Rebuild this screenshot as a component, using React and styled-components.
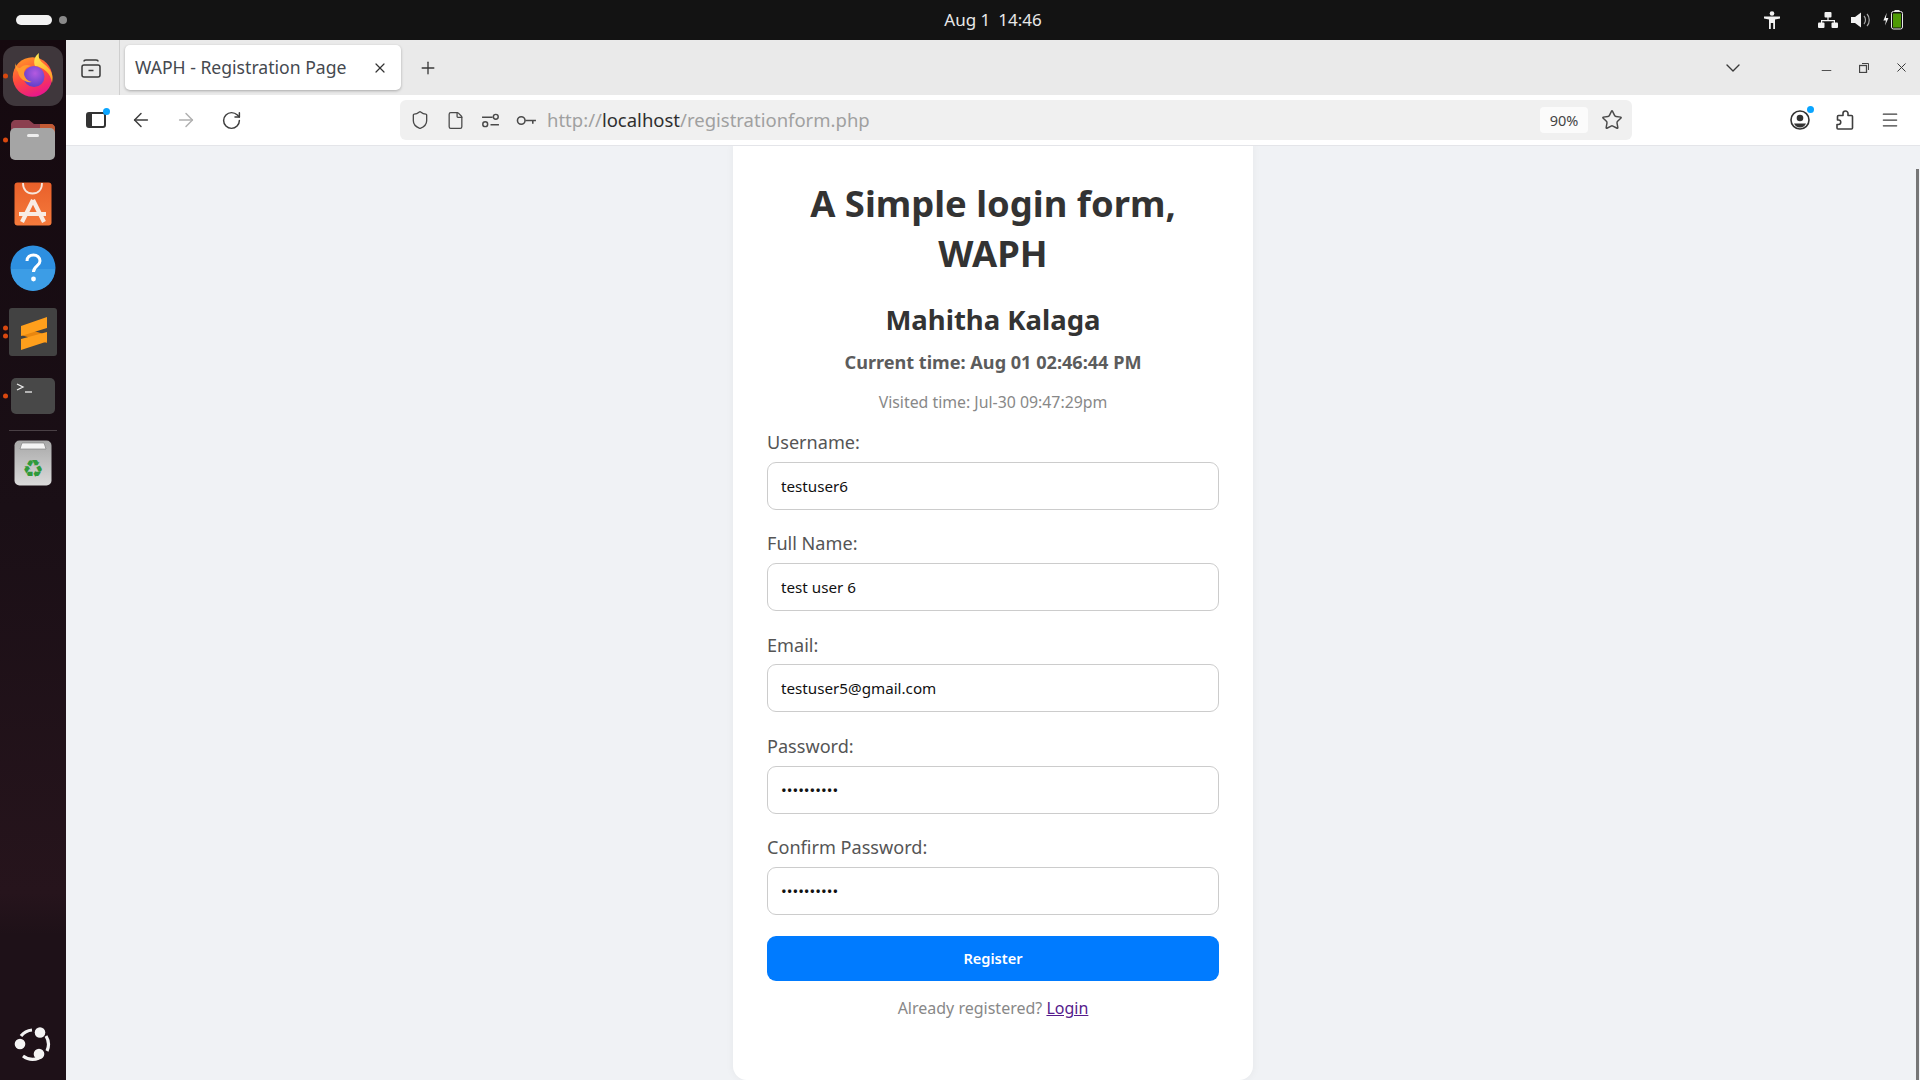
import styled, { createGlobalStyle } from "styled-components";
import { ArrowLeft, ArrowRight, RotateCw, Shield, File, Star, Menu, X, Plus, ChevronDown, Minus } from "lucide-react";

const GlobalStyle = createGlobalStyle`
  html, body { margin: 0; padding: 0; height: 100%; overflow: hidden; }
  * { box-sizing: border-box; }
  body { font-family: "Noto Sans", sans-serif; }
`;

const Screen = styled.div`
  width: 1920px;
  height: 1080px;
  display: grid;
  grid-template-rows: 40px 1fr;
  overflow: hidden;
`;

const TopBar = styled.div`
  background: #131313;
  color: #e8e8e8;
  display: grid;
  grid-template-columns: 1fr auto 1fr;
  align-items: center;
  padding: 0 16px;
  font-size: 17px;
`;

const Workspaces = styled.div`
  display: flex;
  align-items: center;
  gap: 7px;
`;

const WsPill = styled.span`
  width: 36px;
  height: 10px;
  border-radius: 5px;
  background: #f2f2f2;
`;

const WsDot = styled.span`
  width: 8px;
  height: 8px;
  border-radius: 50%;
  background: #8a8a8a;
`;

const Clock = styled.div`
  display: flex;
  gap: 8px;
  padding: 0 0 2px 66px;
`;

const Tray = styled.div`
  display: flex;
  justify-content: flex-end;
  align-items: center;
  gap: 13px;
  padding-right: 1px;
`;

const TrayGap = styled.span`
  width: 12px;
`;

const Body = styled.div`
  display: grid;
  grid-template-columns: 66px 1fr;
  min-height: 0;
`;

const Dock = styled.nav`
  background: linear-gradient(180deg, #15090f 0%, #1a0f16 45%, #26141c 82%, #1e1118 86%, #1e1118 100%);
  display: flex;
  flex-direction: column;
  align-items: center;
  padding-top: 6px;
  position: relative;
`;

const DockItem = styled.div`
  position: relative;
  width: 60px;
  height: 60px;
  margin-bottom: 4px;
  border-radius: 13px;
  display: flex;
  align-items: center;
  justify-content: center;
  background: ${(p) => (p.$active ? "#3f373c" : "transparent")};
`;

const RunDots = styled.span`
  position: absolute;
  left: 0;
  top: 50%;
  transform: translateY(-50%);
  display: flex;
  flex-direction: column;
  gap: 3px;
`;

const RunDot = styled.i`
  display: block;
  width: 5px;
  height: 5px;
  border-radius: 50%;
  background: #d9480f;
`;

const DockRule = styled.div`
  width: 48px;
  height: 1px;
  background: #4a4045;
  margin: 0 0 2px;
`;

const DockBottom = styled.div`
  margin-top: auto;
  margin-bottom: 2px;
`;

const Browser = styled.div`
  display: grid;
  grid-template-rows: 55px 51px 1fr;
  min-height: 0;
  min-width: 0;
`;

const TabStrip = styled.div`
  background: #eaeaea;
  display: flex;
  align-items: center;
  color: #3a3a3a;
`;

const TabViews = styled.div`
  width: 54px;
  height: 100%;
  padding-right: 4px;
  display: flex;
  align-items: center;
  justify-content: center;
  border-right: 1px solid #cfcfcf;
`;

const Tab = styled.div`
  width: 276px;
  height: 45px;
  margin-left: 5px;
  padding: 0 13px 0 10px;
  background: #fff;
  border-radius: 5px;
  box-shadow: 0 1px 3px rgba(0, 0, 0, 0.28);
  display: flex;
  align-items: center;
  justify-content: space-between;
  font-size: 17.6px;
  color: #45494f;
`;

const TabLabel = styled.span`
  padding-bottom: 2px;
`;

const NewTab = styled.div`
  width: 53px;
  display: flex;
  justify-content: center;
`;

const StripEnd = styled.div`
  margin-left: auto;
  display: flex;
  align-items: center;
`;

const ListTabs = styled.div`
  margin-right: 74px;
  display: flex;
`;

const WinButtons = styled.div`
  display: flex;
  align-items: center;
  gap: 25px;
  padding-right: 11px;
`;

const MinButton = styled.span`
  display: flex;
  transform: translateY(3px);
`;

const Toolbar = styled.div`
  background: #fff;
  border-bottom: 1px solid #e4e5e9;
  display: flex;
  align-items: center;
  padding-left: 20px;
  color: #3e3e3e;
`;

const NavButtons = styled.div`
  display: flex;
  align-items: center;
  gap: 23.5px;
  width: 314px;
`;

const Badged = styled.span`
  position: relative;
  display: flex;
  &::after {
    content: "";
    position: absolute;
    top: -4px;
    right: -4px;
    width: 7px;
    height: 7px;
    border-radius: 50%;
    background: #0aa5ff;
  }
`;

const UrlBar = styled.div`
  width: 1232px;
  height: 40px;
  background: #f0f0f0;
  border-radius: 6px;
  display: flex;
  align-items: center;
  padding-left: 10px;
  gap: 16px;
  color: #4a4a4a;
`;

const UrlText = styled.div`
  font-size: 18.5px;
  color: #a0a0a0;
  margin-left: -6px;
  padding-bottom: 2px;
  flex: 1;
  b {
    font-weight: 400;
    color: #2e2e2e;
  }
`;

const Zoom = styled.div`
  width: 48px;
  height: 26px;
  background: #fbfbfb;
  border-radius: 4px;
  display: flex;
  align-items: center;
  justify-content: center;
  font-size: 14.5px;
  color: #444;
`;

const UrlStar = styled.div`
  display: flex;
  margin-left: -3px;
  margin-right: 9px;
`;

const ToolEnd = styled.div`
  margin-left: auto;
  display: flex;
  align-items: center;
  gap: 25px;
  padding-right: 20px;
`;

const Page = styled.main`
  background: #f0f2f5;
  position: relative;
  overflow: hidden;
  display: flex;
  justify-content: center;
`;

const ScrollThumb = styled.div`
  position: absolute;
  right: 1px;
  top: 23px;
  bottom: 0;
  width: 3px;
  background: #767676;
`;

const Card = styled.section`
  width: 520px;
  height: 934px;
  background: #fff;
  border-radius: 0 0 14px 14px;
  box-shadow: 0 0 9px rgba(0, 0, 0, 0.05);
  padding: 32px 34px 0;
  display: flex;
  flex-direction: column;
  align-items: stretch;
  text-align: center;
`;

const Title = styled.h1`
  margin: 0 auto;
  width: 400px;
  font-size: 36.4px;
  line-height: 50px;
  font-weight: 700;
  color: #333;
`;

const Name = styled.h2`
  margin: 23px 0 0;
  font-size: 27.5px;
  line-height: 38px;
  font-weight: 700;
  color: #333;
`;

const Current = styled.div`
  margin-top: 11px;
  font-size: 18.1px;
  line-height: 25px;
  font-weight: 700;
  color: #5c5c5c;
`;

const Visited = styled.div`
  margin-top: 16px;
  font-size: 15.85px;
  line-height: 22px;
  color: #888;
`;

const Field = styled.div`
  display: flex;
  flex-direction: column;
  text-align: left;
  margin-top: ${(p) => (p.$first ? "17px" : "21.5px")};
`;

const Label = styled.label`
  font-size: 18.1px;
  line-height: 25px;
  margin-bottom: 6.8px;
  color: #555;
`;

const Input = styled.input`
  width: 100%;
  height: 48px;
  padding: 0 13px;
  border: 1px solid #ccc;
  border-radius: 9px;
  background: #fff;
  outline: none;
  font-family: "Noto Sans", sans-serif;
  font-size: 15.2px;
  color: #111;
`;

const Submit = styled.button`
  margin-top: 21px;
  height: 45px;
  border: none;
  border-radius: 9px;
  background: #007bff;
  color: #fff;
  font-family: "Noto Sans", sans-serif;
  font-size: 14.6px;
  font-weight: 600;
`;

const Footer = styled.p`
  margin: 16px 0 0;
  font-size: 16px;
  line-height: 22px;
  color: #888;
  a {
    color: #551a8b;
  }
`;

const FirefoxLogo = () => (
  <svg width="44" height="47" viewBox="0 1 44 47">
    <defs>
      <linearGradient id="ffBody" x1="0.2" y1="0" x2="0.6" y2="1">
        <stop offset="0" stopColor="#ff9a26" />
        <stop offset="0.5" stopColor="#ff4a3d" />
        <stop offset="1" stopColor="#e8158f" />
      </linearGradient>
      <linearGradient id="ffTail" x1="0.3" y1="0" x2="0.8" y2="1">
        <stop offset="0" stopColor="#ffe34d" />
        <stop offset="1" stopColor="#ff9a26" />
      </linearGradient>
      <radialGradient id="ffGlobe" cx="0.55" cy="0.35" r="0.8">
        <stop offset="0" stopColor="#b45ae0" />
        <stop offset="1" stopColor="#4a3bc4" />
      </radialGradient>
    </defs>
    <circle cx="21.500" cy="25" r="19.800" fill="url(#ffBody)" />
    <path d="M28 1C27 6 29 9 33 12C40 17 43 23 41 31C40 21 32 15 24 14C22 9 24 4 28 1z" fill="url(#ffTail)" />
    <circle cx="23" cy="24.500" r="10.500" fill="url(#ffGlobe)" />
    <path d="M4 11C5 15 7 16 9 16C12 13 16 12 20 14C15 15 13 18 13 21C13 25 16 29 21 30C15 31 8 27 7 20C5 18 4 15 4 11z" fill="#ff9b2e" />
  </svg>
);

const FilesIcon = () => (
  <svg width="46" height="42" viewBox="0 0 46 42">
    <path d="M1 6c0-3 2-5 5-5h13l5 4h17c2 0 4 2 4 4v12H1z" fill="#8b3f4f" />
    <path d="M30 5h11c2 0 4 2 4 4v5H30z" fill="#c25a34" />
    <rect x="0" y="9" width="45" height="32" rx="5" fill="#a5a5a5" />
    <rect x="17" y="15" width="12" height="3" rx="1.5" fill="#eee" />
  </svg>
);

const StoreIcon = () => (
  <svg width="38" height="44" viewBox="0 0 38 44">
    <defs>
      <linearGradient id="storeBag" x1="0" y1="0" x2="0" y2="1">
        <stop offset="0" stopColor="#e9602a" />
        <stop offset="1" stopColor="#f57a3c" />
      </linearGradient>
    </defs>
    <rect x="0.500" y="0.500" width="37" height="43" rx="3" fill="url(#storeBag)" />
    <path d="M9 1c0 7 4 10.500 9.500 10.500S28 8 28 1" fill="none" stroke="#f6e6dc" strokeWidth="1.800" />
    <path d="M19 18L8 40M19 18l11 22M5 32h27" fill="none" stroke="#f8ece5" strokeWidth="4.200" />
  </svg>
);

const HelpIcon = () => (
  <svg width="46" height="46" viewBox="0 0 46 46">
    <circle cx="23" cy="23" r="22.5" fill="#2d8fe0" />
    <path d="M1 24a22 22 0 0 0 44 0z" fill="#3c9de6" />
    <path d="M17 16c0-4 3-6 6.500-6s6.500 2.500 6.500 6c0 5-6.500 5-6.500 11" fill="none" stroke="#fff" strokeWidth="3" />
    <circle cx="23.500" cy="34" r="2.400" fill="#fff" />
  </svg>
);

const SublimeIcon = () => (
  <svg width="48" height="48" viewBox="0 0 48 48">
    <rect width="48" height="48" rx="3" fill="#424242" />
    <path d="M12 19L38 27v8L12 27z" fill="#e8860f" />
    <path d="M12 18L38 9v11L12 28z" fill="#ff9f1c" />
    <path d="M12 31L38 24v9.500L12 42z" fill="#ff9f1c" />
  </svg>
);

const TerminalIcon = () => (
  <svg width="44" height="36" viewBox="0 0 44 36">
    <rect width="44" height="36" rx="5" fill="#484848" />
    <path d="M6 6l6 3-6 3" fill="none" stroke="#eee" strokeWidth="1.300" />
    <path d="M14 14h7" stroke="#eee" strokeWidth="1.300" />
  </svg>
);

const TrashIcon = () => (
  <svg width="38" height="46" viewBox="0 0 38 46">
    <defs>
      <linearGradient id="trashBody" x1="0" y1="0" x2="0" y2="1">
        <stop offset="0" stopColor="#a8a8a8" />
        <stop offset="1" stopColor="#dadada" />
      </linearGradient>
    </defs>
    <rect x="0.500" y="0.500" width="37" height="45" rx="5" fill="url(#trashBody)" />
    <path d="M6 9l2-6h22l2 6z" fill="#f4f4f4" stroke="#777" strokeWidth="0.600" />
    <text x="19" y="37" textAnchor="middle" fontFamily="DejaVu Sans" fontSize="24" fill="#2f9a3a">♻</text>
  </svg>
);

const UbuntuLogo = () => (
  <svg width="38" height="38" viewBox="0 0 38 38">
    <g fill="none" stroke="#f4f4f4" strokeWidth="3.200">
      <path d="M7 11a16 16 0 0 1 11-6" />
      <path d="M32 11a16 16 0 0 1 1 15" />
      <path d="M25 33a16 16 0 0 1-16-2" />
    </g>
    <circle cx="26" cy="7.500" r="5.300" fill="#f4f4f4" />
    <circle cx="6" cy="19" r="5.300" fill="#f4f4f4" />
    <circle cx="25" cy="29" r="5.300" fill="#f4f4f4" />
  </svg>
);

const TabViewIcon = () => (
  <svg width="20" height="20" viewBox="0 0 20 20" fill="none" stroke="#3a3a3a" strokeWidth="1.500">
    <rect x="1" y="7" width="18" height="12" rx="2" />
    <path d="M3 3.500C3 2.500 4 2 5 2h10c1 0 2 .5 2 1.500" />
    <path d="M7.500 12.500h5" />
  </svg>
);

const SidebarIcon = () => (
  <svg width="20" height="16" viewBox="0 0 20 16">
    <rect x="1" y="1" width="18" height="14" rx="2" fill="none" stroke="#333" strokeWidth="2" />
    <rect x="1" y="1" width="5" height="14" fill="#333" />
  </svg>
);

const PermsIcon = () => (
  <svg width="19" height="15" viewBox="0 0 18 14" fill="none" stroke="#4a4a4a" strokeWidth="1.400">
    <path d="M1 4h10M9 11h8" />
    <circle cx="14" cy="3.500" r="2.300" />
    <circle cx="4" cy="10.500" r="2.300" />
  </svg>
);

const KeyIcon = () => (
  <svg width="21" height="11" viewBox="0 0 20 10" fill="none" stroke="#4a4a4a" strokeWidth="1.500">
    <circle cx="5" cy="5" r="3.600" />
    <path d="M9 5h10M16 5v3" />
  </svg>
);

const AccountIcon = () => (
  <svg width="20" height="20" viewBox="0 0 20 20">
    <circle cx="10" cy="10" r="9" fill="none" stroke="#333" strokeWidth="1.600" />
    <circle cx="10" cy="8" r="3.300" fill="#333" />
    <path d="M4 13.500h12c-1 2.500-3.500 4-6 4s-5-1.500-6-4z" fill="#333" />
  </svg>
);

const PuzzleIcon = () => (
  <svg width="20" height="20" viewBox="0 0 20 20" fill="none" stroke="#3e3e3e" strokeWidth="1.600" strokeLinejoin="round">
    <path d="M8 5.500V3.500a2.500 2.500 0 0 1 5 0v2h3.500a1 1 0 0 1 1 1V18a1 1 0 0 1-1 1H3a1 1 0 0 1-1-1v-3.500h1.500a2.200 2.200 0 0 0 0-4.500H2.500V6.500a1 1 0 0 1 1-1z" />
  </svg>
);

const RestoreIcon = () => (
  <svg width="10" height="10" viewBox="0 0 10 10" fill="none" stroke="#444" strokeWidth="1">
    <rect x="0.500" y="2.500" width="7" height="7" strokeWidth="1.300" />
    <path d="M3 0.500h6.500V7" />
  </svg>
);

const A11yIcon = () => (
  <svg width="16" height="18" viewBox="0 0 16 18" fill="#f2f2f2">
    <circle cx="8" cy="2.500" r="2.300" />
    <path d="M0 5.500h16v2l-5 1V18H9.200v-6H6.800v6H5V8.500l-5-1z" />
  </svg>
);

const NetworkIcon = () => (
  <svg width="20" height="16" viewBox="0 0 20 16" fill="#f2f2f2">
    <rect x="6.500" y="0" width="7" height="5.500" rx="1" />
    <rect x="0" y="10.500" width="6.500" height="5.500" rx="1" />
    <rect x="13.500" y="10.500" width="6.500" height="5.500" rx="1" />
    <path d="M9.400 5h1.200v3h6.400v3h-1.200V9.200H4.200V11H3V8h6.400z" />
  </svg>
);

const VolumeIcon = () => (
  <svg width="19" height="16" viewBox="0 0 19 16">
    <path d="M0 5h4l6-4.500v15L4 11H0z" fill="#f2f2f2" />
    <path d="M13 4c2 2 2 6 0 8M16 2c3 3 3 9 0 12" fill="none" stroke="#a8a8a8" strokeWidth="1.200" />
  </svg>
);

const BatteryIcon = () => (
  <svg width="20" height="20" viewBox="0 0 20 20">
    <path d="M5 1L1 10h3l-1 6 4-9H4z" fill="#f2f2f2" transform="translate(-0.500 2) scale(.85)" />
    <rect x="8.500" y="1.500" width="11" height="17.500" rx="2" fill="none" stroke="#e8e8e8" strokeWidth="1" />
    <rect x="11.500" y="0" width="5" height="1.500" fill="#e8e8e8" />
    <rect x="10" y="3.500" width="8" height="14" fill="#4e9a06" />
  </svg>
);

const fields = [
  { label: "Username:", value: "testuser6", type: "text" },
  { label: "Full Name:", value: "test user 6", type: "text" },
  { label: "Email:", value: "testuser5@gmail.com", type: "text" },
  { label: "Password:", value: "abcdefghij", type: "password" },
  { label: "Confirm Password:", value: "abcdefghij", type: "password" },
];

export default function App() {
  return (
    <Screen>
      <GlobalStyle />
      <TopBar>
        <Workspaces>
          <WsPill />
          <WsDot />
        </Workspaces>
        <Clock>
          <span>Aug 1</span>
          <span>14:46</span>
        </Clock>
        <Tray>
          <A11yIcon />
          <TrayGap />
          <NetworkIcon />
          <VolumeIcon />
          <BatteryIcon />
        </Tray>
      </TopBar>
      <Body>
        <Dock>
          <DockItem $active>
            <RunDots><RunDot /></RunDots>
            <FirefoxLogo />
          </DockItem>
          <DockItem>
            <RunDots><RunDot /></RunDots>
            <FilesIcon />
          </DockItem>
          <DockItem><StoreIcon /></DockItem>
          <DockItem><HelpIcon /></DockItem>
          <DockItem>
            <RunDots><RunDot /><RunDot /></RunDots>
            <SublimeIcon />
          </DockItem>
          <DockItem>
            <RunDots><RunDot /></RunDots>
            <TerminalIcon />
          </DockItem>
          <DockRule />
          <DockItem><TrashIcon /></DockItem>
          <DockBottom>
            <DockItem><UbuntuLogo /></DockItem>
          </DockBottom>
        </Dock>
        <Browser>
          <TabStrip>
            <TabViews><TabViewIcon /></TabViews>
            <Tab>
              <TabLabel>WAPH - Registration Page</TabLabel>
              <X size={16} strokeWidth={1.8} color="#333" />
            </Tab>
            <NewTab><Plus size={20} strokeWidth={1.6} /></NewTab>
            <StripEnd>
              <ListTabs><ChevronDown size={24} strokeWidth={1.4} /></ListTabs>
              <WinButtons>
                <MinButton><Minus size={15} strokeWidth={1.4} /></MinButton>
                <RestoreIcon />
                <X size={15} strokeWidth={1.6} />
              </WinButtons>
            </StripEnd>
          </TabStrip>
          <Toolbar>
            <NavButtons>
              <Badged><SidebarIcon /></Badged>
              <ArrowLeft size={22} strokeWidth={1.6} />
              <ArrowRight size={22} strokeWidth={1.6} color="#b0b0b0" />
              <RotateCw size={21} strokeWidth={1.7} />
            </NavButtons>
            <UrlBar>
              <Shield size={20} strokeWidth={1.6} />
              <File size={19} strokeWidth={1.6} />
              <PermsIcon />
              <KeyIcon />
              <UrlText>http://<b>localhost</b>/registrationform.php</UrlText>
              <Zoom>90%</Zoom>
              <UrlStar><Star size={22} strokeWidth={1.6} /></UrlStar>
            </UrlBar>
            <ToolEnd>
              <Badged><AccountIcon /></Badged>
              <PuzzleIcon />
              <Menu size={20} strokeWidth={1.5} />
            </ToolEnd>
          </Toolbar>
          <Page>
            <Card>
              <Title>A Simple login form, WAPH</Title>
              <Name>Mahitha Kalaga</Name>
              <Current>Current time: Aug 01 02:46:44 PM</Current>
              <Visited>Visited time: Jul-30 09:47:29pm</Visited>
              {fields.map((f, i) => (
                <Field key={f.label} $first={i === 0}>
                  <Label>{f.label}</Label>
                  <Input type={f.type} value={f.value} readOnly />
                </Field>
              ))}
              <Submit>Register</Submit>
              <Footer>Already registered? <a href="#login">Login</a></Footer>
            </Card>
            <ScrollThumb />
          </Page>
        </Browser>
      </Body>
    </Screen>
  );
}
